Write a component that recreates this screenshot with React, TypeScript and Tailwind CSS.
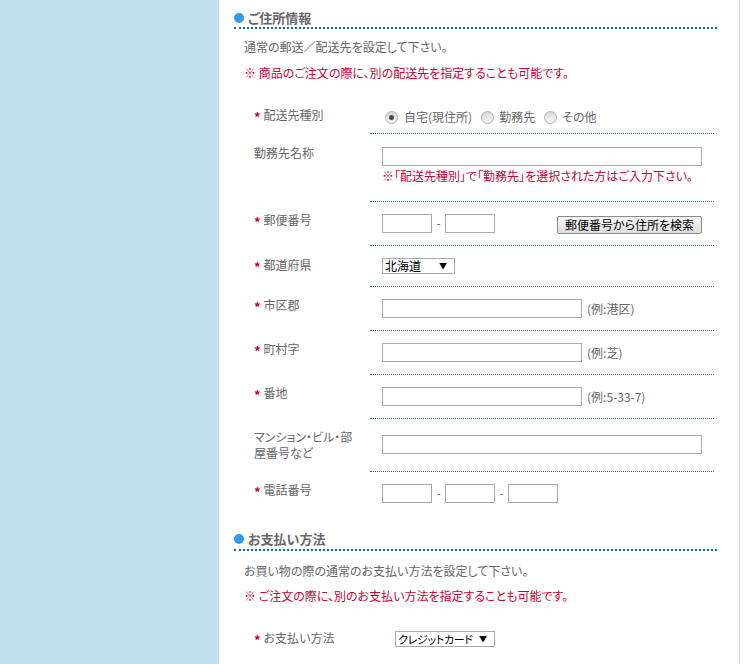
import React from "react";

const font = {
  fontFamily: '"Noto Sans CJK JP", "Noto Sans", sans-serif',
  fontFeatureSettings: '"palt"',
};

function Req() {
  return <span className="inline-block translate-y-[2px] text-[13px] text-[#cc0033] mr-[3px] font-bold">*</span>;
}

function Row({
  label,
  req,
  rowCls,
  labelCls,
  ddCls,
  children,
  last,
}: {
  label: React.ReactNode;
  req?: boolean;
  rowCls: string;
  labelCls: string;
  ddCls: string;
  children: React.ReactNode;
  last?: boolean;
}) {
  return (
    <div className={`flex ${rowCls}`}>
      <div className={`w-[116px] text-[12px] text-[#666] whitespace-nowrap ${labelCls}`}>
        {req && <Req />}
        {label}
      </div>
      <div
        className={`w-[344px] pl-[12px] ${last ? "" : "border-b border-dotted border-[#1d6b85]"} ${ddCls}`}
      >
        {children}
      </div>
    </div>
  );
}

function TextBox({ w }: { w: string }) {
  return <div className={`h-[19px] border border-[#aaa] bg-white ${w}`} />;
}

function Radio({ checked }: { checked?: boolean }) {
  return (
    <span className="w-[13px] h-[13px] rounded-full border border-[#b0b0b0] bg-gradient-to-b from-[#d8d8d8] to-[#f6f6f6] flex items-center justify-center shrink-0">
      {checked && <span className="w-[5px] h-[5px] rounded-full bg-[#4a4a4a]" />}
    </span>
  );
}

function FakeSelect({ w, text, textCls = "" }: { w: string; text: string; textCls?: string }) {
  return (
    <div
      className={`h-[16px] border border-[#a9a9a9] bg-white flex items-center justify-between pl-[2px] pr-[7px] text-[12px] leading-[14px] text-black whitespace-nowrap ${w}`}
    >
      <span className={textCls}>{text}</span>
      <span className="text-[8px]">▼</span>
    </div>
  );
}

function SectionHead({ title, cls }: { title: string; cls: string }) {
  return (
    <h2
      className={`flex items-center gap-[4px] text-[13px] leading-[16px] font-bold text-[#666] border-b-2 border-dotted border-[#0a6e9e] ${cls}`}
    >
      <span className="w-[10px] h-[10px] rounded-full bg-[#3399ee]" />
      {title}
    </h2>
  );
}

export default function App() {
  return (
    <div className="flex w-[748px] h-[664px] overflow-hidden bg-white" style={font}>
      <div className="w-[219px] shrink-0 bg-[#c0e0f0]" />
      <div className="w-[521px] shrink-0 border-r border-[#d0d0d0] pl-[15px]">
        <div className="w-[483px]">
          <SectionHead title="ご住所情報" cls="mt-[10px] pb-[1px]" />
          <p className="mt-[11px] pl-[10px] text-[12px] leading-[14px] text-[#666]">
            通常の郵送／配送先を設定して下さい。
          </p>
          <p className="mt-[12px] pl-[10px] text-[12px] leading-[14px] text-[#cc0033]">
            ※ 商品のご注文の際に、別の配送先を指定することも可能です。
          </p>

          <div className="mt-[25px] pl-[20px]">
            <Row label="配送先種別" req rowCls="h-[29px]" labelCls="pt-[3px] leading-[14px]" ddCls="pt-[5px]">
              <div className="flex items-center text-[12px] leading-[14px] text-[#666]">
                <span className="ml-[3px]"><Radio checked /></span>
                <span className="ml-[6px]">自宅(現住所)</span>
                <span className="ml-[9px]"><Radio /></span>
                <span className="ml-[5px]">勤務先</span>
                <span className="ml-[9px]"><Radio /></span>
                <span className="ml-[5px]">その他</span>
              </div>
            </Row>
            <Row label="勤務先名称" rowCls="h-[68px]" labelCls="pt-[12px] leading-[14px]" ddCls="pt-[13px]">
              <TextBox w="w-[320px]" />
              <p className="mt-[3px] text-[12px] leading-[14px] text-[#cc0033] whitespace-nowrap">
                ※「配送先種別」で「勤務先」を選択された方はご入力下さい。
              </p>
            </Row>
            <Row label="郵便番号" req rowCls="h-[44px]" labelCls="pt-[11px] leading-[14px]" ddCls="pt-[12px]">
              <div className="flex items-start">
                <TextBox w="w-[50px]" />
                <span className="w-[13px] text-center text-[12px] leading-[18px] text-[#666]">-</span>
                <TextBox w="w-[50px]" />
                <button className="ml-[62px] mt-[2px] w-[145px] h-[18px] border border-[#8a8a8a] rounded-[2px] bg-gradient-to-b from-[#f6f6f6] to-[#dedede] text-[12px] leading-[14px] text-black whitespace-nowrap">
                  郵便番号から住所を検索
                </button>
              </div>
            </Row>
            <Row label="都道府県" req rowCls="h-[41px]" labelCls="pt-[12px] leading-[14px]" ddCls="pt-[12px]">
              <FakeSelect w="w-[73px]" text="北海道" />
            </Row>
            <Row label="市区郡" req rowCls="h-[44px]" labelCls="pt-[11px] leading-[14px]" ddCls="pt-[12px]">
              <div className="flex items-center">
                <TextBox w="w-[200px]" />
                <span className="ml-[5px] text-[12px] leading-[14px] text-[#666]">(例:港区)</span>
              </div>
            </Row>
            <Row label="町村字" req rowCls="h-[44px]" labelCls="pt-[11px] leading-[14px]" ddCls="pt-[12px]">
              <div className="flex items-center">
                <TextBox w="w-[200px]" />
                <span className="ml-[5px] text-[12px] leading-[14px] text-[#666]">(例:芝)</span>
              </div>
            </Row>
            <Row label="番地" req rowCls="h-[44px]" labelCls="pt-[11px] leading-[14px]" ddCls="pt-[12px]">
              <div className="flex items-center">
                <TextBox w="w-[200px]" />
                <span className="ml-[5px] text-[12px] leading-[14px] text-[#666]">(例:5-33-7)</span>
              </div>
            </Row>
            <Row
              label={
                <>
                  マンション・ビル・部
                  <br />
                  屋番号など
                </>
              }
              rowCls="h-[53px]"
              labelCls="pt-[10px] leading-[16px]"
              ddCls="pt-[16px]"
            >
              <TextBox w="w-[320px]" />
            </Row>
            <Row label="電話番号" req rowCls="h-[44px]" labelCls="pt-[11px] leading-[14px]" ddCls="pt-[12px]" last>
              <div className="flex items-start">
                <TextBox w="w-[50px]" />
                <span className="w-[13px] text-center text-[12px] leading-[18px] text-[#666]">-</span>
                <TextBox w="w-[50px]" />
                <span className="w-[13px] text-center text-[12px] leading-[18px] text-[#666]">-</span>
                <TextBox w="w-[50px]" />
              </div>
            </Row>
          </div>

          <SectionHead title="お支払い方法" cls="mt-[15px] pb-[2px]" />
          <p className="mt-[13px] pl-[10px] text-[12px] leading-[14px] text-[#666]">
            お買い物の際の通常のお支払い方法を設定して下さい。
          </p>
          <p className="mt-[11px] pl-[10px] text-[12px] leading-[14px] text-[#cc0033]">
            ※ ご注文の際に、別のお支払い方法を指定することも可能です。
          </p>
          <div className="mt-[28px] pl-[20px] flex">
            <div className="w-[141px] text-[12px] leading-[14px] text-[#666]">
              <Req />
              お支払い方法
            </div>
            <FakeSelect w="w-[100px]" text="クレジットカード" textCls="text-[11px] tracking-[-0.3px]" />
          </div>
        </div>
      </div>
    </div>
  );
}
